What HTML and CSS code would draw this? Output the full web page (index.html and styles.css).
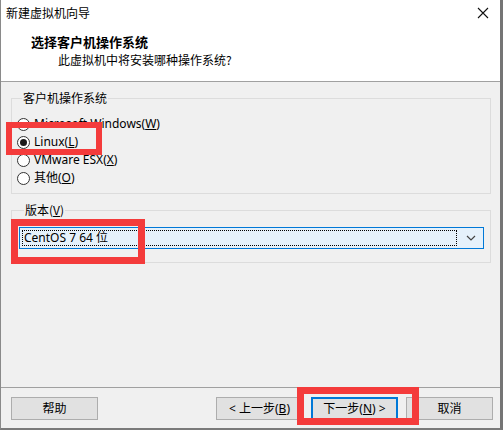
FILE: index.html
```html
<!DOCTYPE html>
<html lang="zh-CN">
<head>
<meta charset="utf-8">
<title>新建虚拟机向导</title>
<link rel="stylesheet" href="styles.css">
</head>
<body>
<div class="window">
  <div class="top">
    <div class="titlebar">
      <span class="title">新建虚拟机向导</span>
      <svg class="close" width="12" height="12" viewBox="0 0 12 12"><path d="M1 1 L11 11 M11 1 L1 11" stroke="#111" stroke-width="1.1" fill="none"/></svg>
    </div>
    <div class="header">
      <div class="h1">选择客户机操作系统</div>
      <div class="h2">此虚拟机中将安装哪种操作系统?</div>
    </div>
  </div>
  <div class="content">
    <fieldset class="group g1">
      <legend>客户机操作系统</legend>
      <div class="radio"><span class="circle"></span><span class="lbl">Microsoft Windows(<u>W</u>)</span></div>
      <div class="radio"><span class="circle checked"></span><span class="lbl">Linux(<u>L</u>)</span></div>
      <div class="radio"><span class="circle"></span><span class="lbl">VMware ESX(<u>X</u>)</span></div>
      <div class="radio"><span class="circle"></span><span class="lbl">其他(<u>O</u>)</span></div>
    </fieldset>
    <fieldset class="group g2">
      <legend>版本(<u>V</u>)</legend>
      <div class="select">
        <div class="focus">CentOS 7 64 位</div>
        <svg class="chev" width="10" height="6" viewBox="0 0 10 6"><path d="M1 1 L5 5 L9 1" stroke="#444" stroke-width="1.2" fill="none"/></svg>
      </div>
    </fieldset>
  </div>
  <div class="footer">
    <button class="btn">帮助</button>
    <div class="spacer"></div>
    <button class="btn">&lt; 上一步(<u>B</u>)</button>
    <button class="btn default">下一步(<u>N</u>) &gt;</button>
    <button class="btn">取消</button>
  </div>
  <div class="mark m1"></div>
  <div class="mark m2"></div>
  <div class="mark m3"></div>
</div>
</body>
</html>
```
FILE: styles.css
```css
* { box-sizing: border-box; }
html, body { margin: 0; padding: 0; }
body {
  width: 503px;
  height: 430px;
  overflow: hidden;
  background: #f0f0f0;
  font-family: "Noto Sans", "Noto Sans CJK SC", sans-serif;
  font-size: 12px;
  color: #000;
}
.window {
  position: relative;
  width: 503px;
  height: 430px;
  display: flex;
  flex-direction: column;
  background: #f0f0f0;
  border-left: 1px solid #8a8a8a;
  border-right: 3px solid #757575;
  border-bottom: 2px solid #7a7a7a;
}
.top { background: #fff; border-bottom: 1px solid #a0a0a0; }
.titlebar {
  height: 26px;
  display: flex;
  align-items: center;
  justify-content: space-between;
  padding: 0 11px 0 5px;
}
.title { line-height: 26px; font-family: "Noto Sans CJK SC", sans-serif; }
.close { display: block; }
.header { height: 55px; padding: 7px 0 0 30px; }
.h1 {
  font-weight: bold;
  font-size: 13px;
  line-height: 18px;
  font-family: "Noto Sans CJK SC", sans-serif;
}
.h2 {
  margin-top: 1px;
  padding-left: 27px;
  line-height: 16px;
  font-family: "Noto Sans CJK SC", sans-serif;
}
.content {
  flex: 1;
  padding: 8px 9px 0 10px;
}
.group {
  margin: 0;
  border: 1px solid #dcdcdc;
  min-width: 0;
}
.group legend {
  padding: 0 1px;
  margin-left: 5px;
  line-height: 16px;
  font-family: "Noto Sans CJK SC", sans-serif;
}
.g1 { padding: 9px 5px 6px 5px; }
.g2 { margin-top: 8px; padding: 9px 6px 13px 7px; }
.radio {
  height: 18px;
  display: flex;
  align-items: center;
}
.circle {
  width: 13px;
  height: 13px;
  border-radius: 50%;
  border: 1px solid #333;
  background: #fff;
  display: flex;
  align-items: center;
  justify-content: center;
  margin-right: 4px;
}
.circle.checked::after {
  content: "";
  width: 7px;
  height: 7px;
  border-radius: 50%;
  background: #1a1a1a;
}
.lbl { line-height: 18px; }
.select {
  height: 22px;
  border: 1px solid #0078d7;
  background: #e5f1fb;
  display: flex;
  align-items: center;
  padding: 0 7px 0 2px;
}
.focus {
  flex: 1;
  height: 16px;
  border: 1px dotted #000;
  line-height: 14px;
  padding-left: 1px;
  margin-right: 9px;
}
.chev { display: block; }
.footer {
  height: 41px;
  border-top: 1px solid #a0a0a0;
  display: flex;
  align-items: flex-start;
  gap: 8px;
  padding: 9px 7px 0 10px;
}
.spacer { flex: 1; }
.btn {
  width: 87px;
  height: 23px;
  margin: 0;
  padding: 0;
  background: #e1e1e1;
  border: 1px solid #adadad;
  font-family: "Noto Sans", "Noto Sans CJK SC", sans-serif;
  font-size: 12px;
  color: #000;
  line-height: 20px;
}
.btn.default { border: 2px solid #0078d7; }
.mark {
  position: absolute;
  border: 6px solid #f43b3b;
}
.m1 { left: 5px; top: 122px; width: 96px; height: 33px; }
.m2 { left: 10px; top: 219px; width: 134px; height: 45px; border-width: 7px; }
.m3 { left: 296px; top: 387px; width: 122px; height: 38px; border-width: 7px; }
```
